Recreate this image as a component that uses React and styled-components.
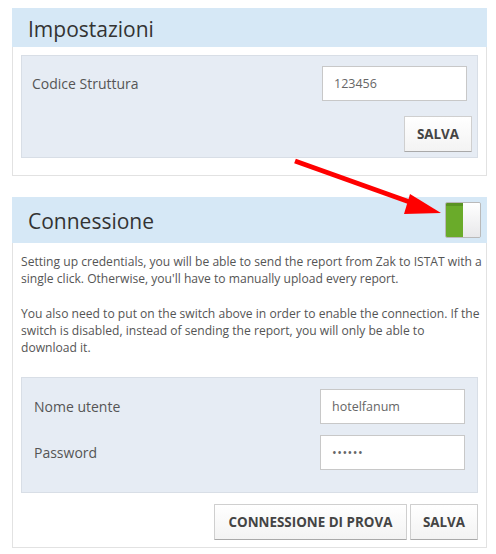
import React from "react";
import styled, { createGlobalStyle } from "styled-components";

const Global = createGlobalStyle`
  body {
    margin: 0;
    background: #fff;
    font-family: "Open Sans", "Liberation Sans", sans-serif;
    color: #555;
  }
`;

const Page = styled.div`
  position: relative;
  width: 475px;
  padding: 8px 0 0 12px;
  display: flex;
  flex-direction: column;
  gap: 21px;
`;

const Panel = styled.div`
  border: 1px solid #e2e2e2;
  border-top: none;
  background: #fff;
  padding-bottom: ${(p) => p.$bottom}px;
`;

const Header = styled.div`
  height: ${(p) => p.$height}px;
  box-sizing: border-box;
  background: #d6e8f6;
  display: flex;
  align-items: center;
  justify-content: space-between;
  padding: 2px 6px 0 16px;
  margin: 0 -1px;
`;

const Title = styled.h2`
  margin: 0;
  font-size: 21px;
  font-weight: 400;
  color: #333;
`;

const Body = styled.div`
  padding: 8px 8px 0;
`;

const Gray = styled.div`
  background: #e6ecf4;
  border: 1px solid #d8dee6;
  padding: ${(p) => p.$pad};
  display: flex;
  flex-direction: column;
  gap: ${(p) => p.$gap}px;
`;

const Row = styled.div`
  display: flex;
  align-items: center;
  justify-content: space-between;
  padding-right: ${(p) => p.$right || 0}px;
`;

const Label = styled.span`
  font-size: 14px;
  color: #555;
`;

const Input = styled.div`
  box-sizing: border-box;
  width: 145px;
  height: 35px;
  border: 1px solid #c8c8c8;
  background: #fff;
  display: flex;
  align-items: center;
  padding-left: 11px;
  font-size: 12.5px;
  color: #666;
  letter-spacing: ${(p) => (p.$dots ? "0.5px" : "0")};
`;

const Actions = styled.div`
  display: flex;
  justify-content: flex-end;
  gap: 3px;
  margin-top: ${(p) => p.$top}px;
`;

const Button = styled.button`
  height: 36px;
  padding: 0 ${(p) => (p.$wide ? 13.5 : 12)}px;
  border: 1px solid #cfcfcf;
  border-bottom-color: #a9a9a9;
  border-radius: 1px;
  background: linear-gradient(#ffffff, #f3f3f3);
  font-family: "Open Sans", "Liberation Sans", sans-serif;
  font-size: 13.4px;
  font-weight: 700;
  color: #444;
  text-transform: uppercase;
`;

const Text = styled.p`
  margin: 2px -4px 0 0;
  font-size: 12.1px;
  line-height: 17.3px;
  color: #555;
  & + & {
    margin-top: 17.3px;
  }
`;

const Spacer = styled.div`
  height: 20px;
`;

const Switch = styled.div`
  width: 36px;
  height: 36px;
  display: flex;
  border: 1px solid #b9b9b9;
  border-radius: 2px;
  overflow: hidden;
  box-sizing: border-box;
  margin-top: -2px;
`;

const SwitchOn = styled.div`
  flex: 1;
  background: linear-gradient(#5a9323 0, #5a9323 3px, #6aab2a 3px);
`;

const SwitchKnob = styled.div`
  flex: 1;
  background: linear-gradient(#ffffff, #e8e8ea);
`;

const Arrow = styled.svg`
  position: absolute;
  left: 0;
  top: 0;
  pointer-events: none;
`;

export default function App() {
  return (
    <>
      <Global />
      <Page>
        <Panel $bottom={17}>
          <Header $height={39}>
            <Title>Impostazioni</Title>
          </Header>
          <Body>
            <Gray $pad="10px 5px 5px 10px" $gap={15}>
              <Row $right={5}>
                <Label>Codice Struttura</Label>
                <Input>123456</Input>
              </Row>
              <Actions $top={0}>
                <Button>Salva</Button>
              </Actions>
            </Gray>
          </Body>
        </Panel>

        <Panel $bottom={7}>
          <Header $height={46}>
            <Title>Connessione</Title>
            <Switch>
              <SwitchOn />
              <SwitchKnob />
            </Switch>
          </Header>
          <Body>
            <Text>
              Setting up credentials, you will be able to send the report from
              Zak to ISTAT with a single click. Otherwise, you'll have to
              manually upload every report.
            </Text>
            <Text>
              You also need to put on the switch above in order to enable the
              connection. If the switch is disabled, instead of sending the
              report, you will only be able to download it.
            </Text>
            <Spacer />
            <Gray $pad="11px 12px 22px 12px" $gap={11}>
              <Row>
                <Label>Nome utente</Label>
                <Input>hotelfanum</Input>
              </Row>
              <Row>
                <Label>Password</Label>
                <Input $dots>••••••</Input>
              </Row>
            </Gray>
            <Actions $top={11}>
              <Button $wide>Connessione di prova</Button>
              <Button>Salva</Button>
            </Actions>
          </Body>
        </Panel>

        <Arrow width="496" height="554">
          <line x1="295" y1="161" x2="418" y2="205" stroke="#ff0000" strokeWidth="5" />
          <polygon points="441,213 410,194 404,214" fill="#ff0000" />
        </Arrow>
      </Page>
    </>
  );
}
